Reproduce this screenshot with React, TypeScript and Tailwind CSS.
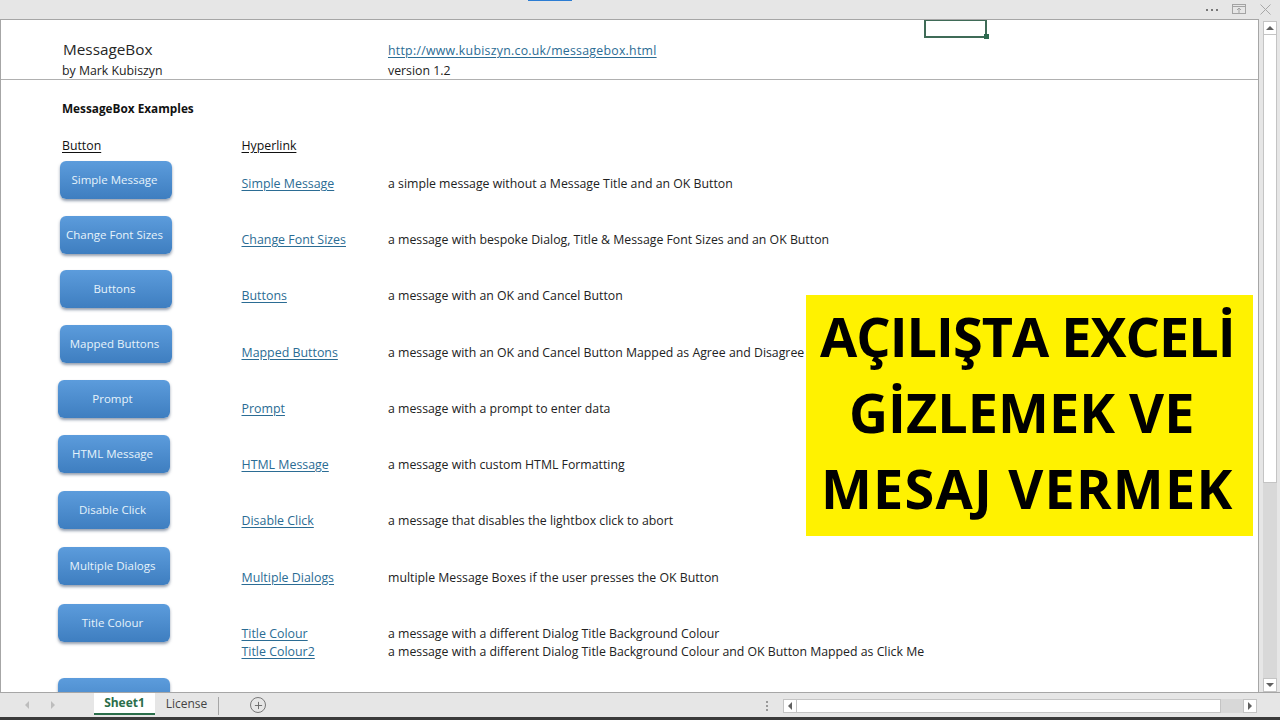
import { Plus } from "lucide-react";

const buttons = [
  { label: "Simple Message", className: "mt-[6px] ml-[-2px]" },
  { label: "Change Font Sizes", className: "mt-[17px] ml-[-2px]" },
  { label: "Buttons", className: "mt-[16px] ml-[-2px]" },
  { label: "Mapped Buttons", className: "mt-[17px] ml-[-2px]" },
  { label: "Prompt", className: "mt-[17px] ml-[-4px]" },
  { label: "HTML Message", className: "mt-[17px] ml-[-4px]" },
  { label: "Disable Click", className: "mt-[18px] ml-[-4px]" },
  { label: "Multiple Dialogs", className: "mt-[18px] ml-[-4px]" },
  { label: "Title Colour", className: "mt-[19px] ml-[-4px]" },
  { label: "", className: "mt-[36px] ml-[-4px]" },
];

const rows = [
  ["Simple Message", "a simple message without a Message Title and an OK Button"],
  ["Change Font Sizes", "a message with bespoke Dialog, Title & Message Font Sizes and an OK Button"],
  ["Buttons", "a message with an OK and Cancel Button"],
  ["Mapped Buttons", "a message with an OK and Cancel Button Mapped as Agree and Disagree"],
  ["Prompt", "a message with a prompt to enter data"],
  ["HTML Message", "a message with custom HTML Formatting"],
  ["Disable Click", "a message that disables the lightbox click to abort"],
  ["Multiple Dialogs", "multiple Message Boxes if the user presses the OK Button"],
  ["Title Colour", "a message with a different Dialog Title Background Colour"],
];

function Arrow({ dir, color = "#606060" }: { dir: "up" | "down" | "left" | "right"; color?: string }) {
  const points = {
    up: "1,7 9,7 5,3",
    down: "1,3 9,3 5,7",
    left: "7,1 7,9 3,5",
    right: "3,1 3,9 7,5",
  }[dir];
  return (
    <svg width="10" height="10" viewBox="0 0 10 10">
      <polygon points={points} fill={color} />
    </svg>
  );
}

function ScrollButton({ dir }: { dir: "up" | "down" | "left" | "right" }) {
  return (
    <div className="flex h-[14px] w-[14px] shrink-0 items-center justify-center border border-[#c4c4c4] bg-white">
      <Arrow dir={dir} />
    </div>
  );
}

export default function App() {
  return (
    <div className="relative flex h-[720px] w-[1280px] flex-col overflow-hidden bg-[#e6e6e6] font-['Open_Sans',sans-serif] text-[12.3px] text-[#222]">
      {/* Title strip */}
      <div className="relative flex h-[19px] shrink-0 items-center justify-end">
        <div className="absolute top-0 left-[528px] h-[1px] w-[44px] bg-[#2b7cd3]" />
        <div className="mr-[62px] flex gap-[3px]">
          <span className="h-[2px] w-[2px] bg-[#777]" />
          <span className="h-[2px] w-[2px] bg-[#777]" />
          <span className="h-[2px] w-[2px] bg-[#777]" />
        </div>
        <svg width="14" height="10" viewBox="0 0 14 10" className="absolute left-[1232px] top-[4px]" fill="none" stroke="#a3a3a3">
          <rect x="0.5" y="0.5" width="13" height="9" />
          <path d="M0.5 2.5H13.5M7 9V4M5 6l2-2 2 2" />
        </svg>
        <svg width="11" height="11" viewBox="0 0 11 11" className="absolute left-[1260px] top-[4px]" stroke="#a8a8a8">
          <path d="M0.5 0.5l10 10M10.5 0.5l-10 10" />
        </svg>
      </div>

      <div className="flex min-h-0 flex-1">
        {/* Sheet */}
        <div className="relative h-[673px] w-[1259px] overflow-hidden border-t border-r border-l border-[#a6a6a6] bg-white">
          <div className="flex h-[60px] border-b border-[#b0b0b0] pl-[61px]">
            <div className="w-[326px]">
              <div className="mt-[19px] ml-[1px] text-[15.3px] leading-[20px] text-[#262626]">MessageBox</div>
              <div className="mt-[3px] leading-[18px]">by Mark Kubiszyn</div>
            </div>
            <div>
              <div className="mt-[22px] leading-[18px] tracking-[0.27px] text-[#2b6c94] underline underline-offset-2">
                http://www.kubiszyn.co.uk/messagebox.html
              </div>
              <div className="mt-[2px] leading-[18px]">version 1.2</div>
            </div>
          </div>

          <div className="mt-[19px] pl-[61px] text-[11.8px] leading-[18px] font-bold text-[#111]">MessageBox Examples</div>

          <div className="mt-[20px] flex pl-[61px] leading-[18px] text-[#111] underline underline-offset-2">
            <span className="w-[179.5px]">Button</span>
            <span>Hyperlink</span>
          </div>

          <div className="flex pl-[61px]">
            <div className="flex w-[179.5px] shrink-0 flex-col">
              {buttons.map((b, i) => (
                <div
                  key={i}
                  className={`flex h-[38px] w-[112px] shrink-0 items-center justify-center rounded-[6px] bg-gradient-to-b from-[#5c9cdc] to-[#3e7ec0] pr-[3px] pb-[1px] text-[11.5px] text-[#e6f3fb] shadow-[0_2px_3px_rgba(60,80,110,0.55)] ${b.className}`}
                >
                  {b.label}
                </div>
              ))}
            </div>
            <div className="mt-[1px] flex flex-col">
              {rows.map(([link, desc]) => (
                <div key={link} className="flex h-[56.25px] shrink-0 items-center">
                  <span className="w-[146.5px] text-[12.4px] text-[#2b6c94] underline underline-offset-2">{link}</span>
                  <span>{desc}</span>
                </div>
              ))}
              <div className="mt-[-19px] flex h-[18px] shrink-0 items-center">
                <span className="w-[146.5px] text-[12.4px] text-[#2b6c94] underline underline-offset-2">Title Colour2</span>
                <span>a message with a different Dialog Title Background Colour and OK Button Mapped as Click Me</span>
              </div>
            </div>
          </div>

          {/* Selected cell */}
          <div className="absolute top-0 left-[923px] h-[18px] w-[63px] border-2 border-t-1 border-[#3f6b57]">
            <div className="absolute right-[-4px] bottom-[-3px] h-[5px] w-[5px] bg-[#2d6a4f]" />
          </div>
        </div>

        {/* Vertical scrollbar */}
        <div className="flex w-[21px] flex-col items-center pt-[2px]">
          <ScrollButton dir="up" />
          <div className="h-[448px] w-[14px] border-x border-b border-[#c4c4c4] bg-white" />
          <div className="w-[14px] flex-1 bg-[#d8d8d8]" />
          <ScrollButton dir="down" />
        </div>
      </div>

      {/* Sheet tabs and horizontal scrollbar */}
      <div className="flex h-[25px] shrink-0 items-start border-t border-[#a6a6a6]">
        <div className="ml-[22px] flex h-[24px] w-[47px] items-center gap-[16px]">
          <Arrow dir="left" color="#bdbdbd" />
          <Arrow dir="right" color="#bdbdbd" />
        </div>
        <div className="ml-[25px] flex h-[22px] w-[61px] items-center justify-center border-b-2 border-[#2a6e4a] bg-white text-[12px] font-bold text-[#2a6e4a]">
          Sheet1
        </div>
        <div className="flex h-[22px] w-[63px] items-center justify-center text-[12px] text-[#444]">License</div>
        <div className="mt-[4px] h-[18px] w-px bg-[#a6a6a6]" />
        <div className="mt-[4px] ml-[31px] flex h-[16px] w-[16px] items-center justify-center rounded-full border border-[#777]">
          <Plus size={11} strokeWidth={2} color="#666" />
        </div>
        <div className="mt-[8px] ml-[500px] flex flex-col gap-[2px]">
          <span className="h-[2px] w-[2px] bg-[#999]" />
          <span className="h-[2px] w-[2px] bg-[#999]" />
          <span className="h-[2px] w-[2px] bg-[#999]" />
        </div>
        <div className="mt-[6px] ml-[15px] flex h-[14px] w-[474px]">
          <ScrollButton dir="left" />
          <div className="h-[14px] w-[424px] border-y border-r border-[#c4c4c4] bg-white" />
          <div className="flex-1 bg-[#d8d8d8]" />
          <ScrollButton dir="right" />
        </div>
      </div>
      <div className="h-[3px] shrink-0 bg-[#3a3a3a]" />

      {/* Video title banner */}
      <div className="absolute top-[295px] left-[806px] flex h-[241px] w-[447px] flex-col bg-[#fff200] text-[54px] leading-[76px] font-bold text-black">
        <div className="mt-[3px] pl-[14px] tracking-[-1px]">AÇILIŞTA EXCELİ</div>
        <div className="pl-[43px]">GİZLEMEK VE</div>
        <div className="pl-[15px] tracking-[1.2px]">MESAJ VERMEK</div>
      </div>
    </div>
  );
}
